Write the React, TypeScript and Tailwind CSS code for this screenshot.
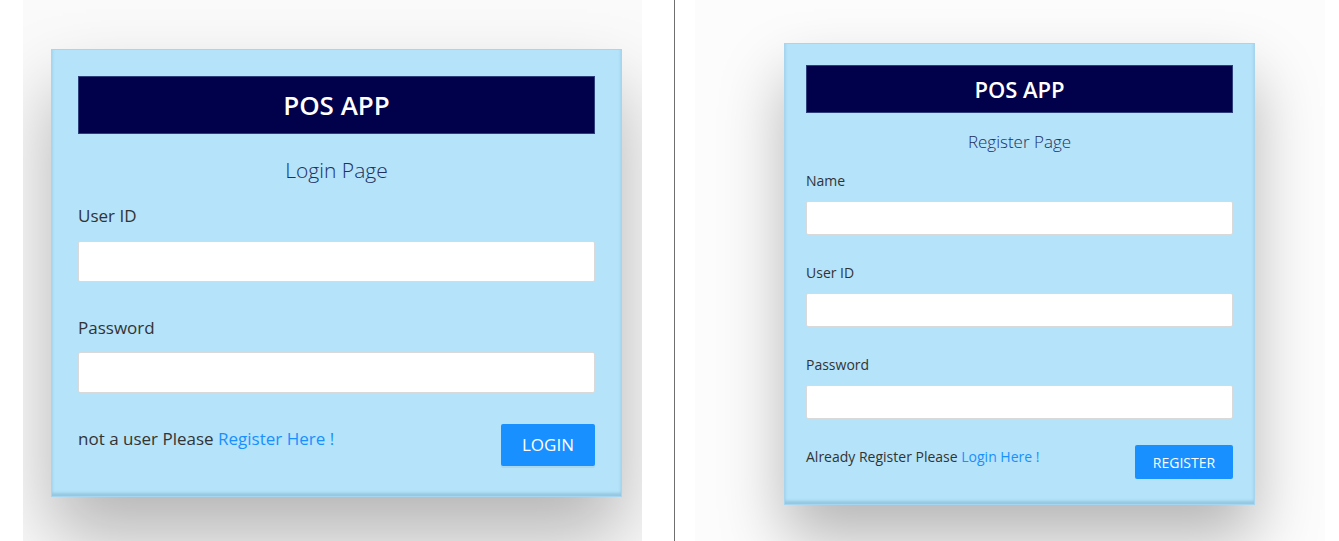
import React from 'react';

const font = { fontFamily: '"Open Sans", "Noto Sans", Arial, sans-serif' };

/**
 * Tarjeta de login (captura izquierda)
 */
const LoginCard: React.FC = () => (
  <div className="w-[571px] bg-[#b4e3fa] pt-[26px] px-[26px] pb-[30px] border border-[#a6d6ef] shadow-[inset_0_-3px_3px_rgba(60,110,150,0.25),0_40px_70px_rgba(0,0,0,0.28)]">
    {/* Header */}
    <div className="h-[58px] bg-[#00004b] flex items-center justify-center border border-[#2c3f7c]">
      <h1 className="text-white text-[26px] font-semibold">POS APP</h1>
    </div>

    <p className="mt-[22px] text-center text-[21px] leading-[28px] font-light text-[#22305e]">Login Page</p>

    {/* Form */}
    <label className="block mt-[20px] text-[17px] leading-[24px] text-[#333]">User ID</label>
    <input className="mt-[13px] block w-full h-[41px] bg-white border border-[#d9d9d9] rounded-[2px] outline-none" />

    <label className="block mt-[34px] text-[17px] leading-[24px] text-[#333]">Password</label>
    <input type="password" className="mt-[12px] block w-full h-[41px] bg-white border border-[#d9d9d9] rounded-[2px] outline-none" />

    {/* Footer */}
    <div className="mt-[31px] flex items-start justify-between">
      <p className="mt-[3px] text-[17px] leading-[24px] text-[#333]">
        not a user Please <span className="text-[#1890ff]">Register Here !</span>
      </p>
      <button className="w-[94px] h-[42px] bg-[#1890ff] text-white text-[17px] rounded-[2px] shadow-[0_2px_0_rgba(0,0,0,0.05)]">
        LOGIN
      </button>
    </div>
  </div>
);

/**
 * Tarjeta de registro (captura derecha, algo más pequeña)
 */
const RegisterCard: React.FC = () => (
  <div className="w-[471px] bg-[#b4e3fa] pt-[21px] px-[21px] pb-[25px] border border-[#a6d6ef] shadow-[inset_0_-3px_3px_rgba(60,110,150,0.25),0_34px_60px_rgba(0,0,0,0.28)]">
    <div className="h-[48px] bg-[#00004b] flex items-center justify-center border border-[#2c3f7c]">
      <h1 className="text-white text-[22px] font-semibold">POS APP</h1>
    </div>

    <p className="mt-[17px] text-center text-[17px] leading-[24px] font-light text-[#22305e]">Register Page</p>

    <label className="block mt-[17px] text-[14px] leading-[20px] text-[#333]">Name</label>
    <input className="mt-[10px] block w-full h-[34px] bg-white border border-[#d9d9d9] rounded-[2px] outline-none" />

    <label className="block mt-[28px] text-[14px] leading-[20px] text-[#333]">User ID</label>
    <input className="mt-[10px] block w-full h-[34px] bg-white border border-[#d9d9d9] rounded-[2px] outline-none" />

    <label className="block mt-[28px] text-[14px] leading-[20px] text-[#333]">Password</label>
    <input type="password" className="mt-[10px] block w-full h-[34px] bg-white border border-[#d9d9d9] rounded-[2px] outline-none" />

    <div className="mt-[26px] flex items-start justify-between">
      <p className="mt-[2px] text-[14px] leading-[20px] text-[#333]">
        Already Register Please <span className="text-[#1890ff]">Login Here !</span>
      </p>
      <button className="w-[98px] h-[34px] bg-[#1890ff] text-white text-[14px] rounded-[2px]">
        REGISTER
      </button>
    </div>
  </div>
);

export default function App() {
  return (
    <div className="w-[1339px] h-[541px] bg-white flex overflow-hidden" style={font}>
      {/* Captura izquierda */}
      <div className="ml-[23px] w-[619px] h-full overflow-hidden bg-[#fafafa] pt-[49px] pl-[28px]">
        <LoginCard />
      </div>

      {/* Separador */}
      <div className="ml-[32px] w-px h-full bg-[#6f6f6f]" />

      {/* Captura derecha */}
      <div className="ml-[20px] w-[630px] h-full overflow-hidden bg-[#fcfcfc] pt-[43px] pl-[89px]">
        <RegisterCard />
      </div>
    </div>
  );
}
